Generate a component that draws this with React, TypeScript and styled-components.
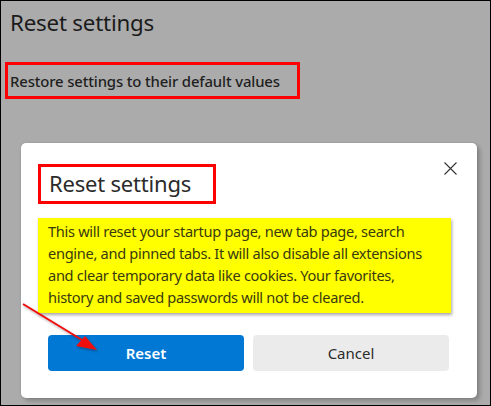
import React from "react";
import styled, { createGlobalStyle } from "styled-components";

const Global = createGlobalStyle`
  html, body { margin: 0; padding: 0; }
  body { font-family: "Noto Sans", "Open Sans", sans-serif; }
  * { box-sizing: border-box; }
`;

const Page = styled.div`
  position: relative;
  width: 491px;
  height: 406px;
  border: 1px solid #000;
  background: #ababab;
  overflow: hidden;
  display: flex;
  flex-direction: column;
`;

const PageTitle = styled.h1`
  margin: 0;
  padding: 6px 0 0 9px;
  height: 61px;
  font-size: 22.3px;
  font-weight: 400;
  color: #1b1b1b;
  letter-spacing: -0.2px;
`;

const Highlight = styled.div<{ $w: number; $h: number }>`
  width: ${(p) => p.$w}px;
  height: ${(p) => p.$h}px;
  border: 3px solid #ff0000;
  display: flex;
  align-items: center;
`;

const RestoreBox = styled(Highlight)`
  margin-left: 4px;
  padding-left: 2px;
  font-size: 14.9px;
  font-weight: 500;
  color: #1f1f1f;
  letter-spacing: -0.15px;
`;

const Dialog = styled.div`
  margin: 44px 0 0 20px;
  width: 456px;
  height: 255px;
  background: #fff;
  border-radius: 5px;
  box-shadow: 3px 3px 4px rgba(0, 0, 0, 0.22), 0 0 3px rgba(0, 0, 0, 0.12);
  padding: 21px 0 0 17px;
  display: flex;
  flex-direction: column;
  position: relative;
`;

const HeaderRow = styled.div`
  display: flex;
  justify-content: space-between;
  align-items: flex-start;
`;

const TitleBox = styled(Highlight)`
  padding: 0 0 2px 8px;
  font-size: 22px;
  color: #2b2b2b;
  letter-spacing: -0.2px;
`;

const Close = styled.button`
  margin: -6px 17px 0 0;
  width: 20px;
  height: 20px;
  padding: 0;
  border: none;
  background: transparent;
  display: flex;
  align-items: center;
  justify-content: center;
`;

const Notice = styled.div`
  margin-top: 14px;
  width: 413px;
  height: 95px;
  background: #ffff00;
  box-shadow: 1px 2px 3px rgba(0, 0, 0, 0.35);
  padding: 2px 0 0 10px;
  font-size: 14.6px;
  line-height: 22px;
  color: #3a3a10;
  letter-spacing: -0.3px;
  white-space: nowrap;
`;

const Line = styled.span`
  display: block;
`;

const Buttons = styled.div`
  margin: 22px 0 0 10px;
  display: flex;
  gap: 9px;
`;

const Button = styled.button<{ $primary?: boolean }>`
  width: 196px;
  height: 36px;
  border: none;
  border-radius: 4px;
  font-family: inherit;
  font-size: 15px;
  font-weight: ${(p) => (p.$primary ? 600 : 400)};
  background: ${(p) => (p.$primary ? "#0078d4" : "#ebebeb")};
  color: ${(p) => (p.$primary ? "#fff" : "#2b2b2b")};
`;

const Arrow = styled.svg`
  position: absolute;
  left: 0;
  top: 0;
  pointer-events: none;
`;

export default function App() {
  return (
    <>
      <Global />
      <Page>
        <PageTitle>Reset settings</PageTitle>
        <RestoreBox $w={295} $h={37}>
          Restore settings to their default values
        </RestoreBox>
        <Dialog>
          <HeaderRow>
            <TitleBox $w={178} $h={40}>Reset settings</TitleBox>
            <Close aria-label="Close">
              <svg width="13" height="13" viewBox="0 0 13 13">
                <path d="M0.5 0.5 L12.5 12.5 M12.5 0.5 L0.5 12.5" stroke="#333" strokeWidth="1.1" fill="none" />
              </svg>
            </Close>
          </HeaderRow>
          <Notice>
            <Line>This will reset your startup page, new tab page, search</Line>
            <Line>engine, and pinned tabs. It will also disable all extensions</Line>
            <Line>and clear temporary data like cookies. Your favorites,</Line>
            <Line>history and saved passwords will not be cleared.</Line>
          </Notice>
          <Buttons>
            <Button $primary>Reset</Button>
            <Button>Cancel</Button>
          </Buttons>
        </Dialog>
        <Arrow width="491" height="406" viewBox="0 0 491 406">
          <defs>
            <filter id="sh" x="-20%" y="-20%" width="140%" height="140%">
              <feDropShadow dx="1" dy="1.5" stdDeviation="1" floodColor="#000" floodOpacity="0.35" />
            </filter>
          </defs>
          <g filter="url(#sh)">
            <line x1="22" y1="303" x2="86" y2="342" stroke="#ee1111" strokeWidth="2" />
            <polygon points="96,349 75,345 84,335" fill="#ee1111" />
          </g>
        </Arrow>
      </Page>
    </>
  );
}
